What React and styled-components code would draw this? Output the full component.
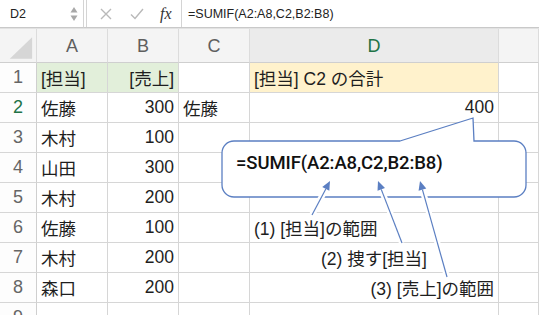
import React from 'react';
import styled, { createGlobalStyle } from 'styled-components';

const Global = createGlobalStyle`
  html, body { margin: 0; padding: 0; background: #fff; }
  body { font-family: "Liberation Sans", "Noto Sans CJK JP", sans-serif; }
`;

const Page = styled.div`
  position: relative;
  width: 539px;
  height: 315px;
  overflow: hidden;
  background: #fff;
`;

const Toolbar = styled.div`
  display: flex;
  align-items: stretch;
  height: 27px;
  border-bottom: 1px solid #c9c9c9;
  color: #222;
  font-size: 12.5px;
`;

const NameBox = styled.div`
  box-sizing: border-box;
  width: 84px;
  display: flex;
  align-items: center;
  justify-content: space-between;
  padding: 0 5px 0 10px;
  border-right: 1px solid #d4d4d4;
  border-bottom: 1px solid #c9c9c9;
  margin-bottom: -1px;
`;

const Spinner = styled.svg`
  width: 8px;
  height: 18px;
`;

const Actions = styled.div`
  display: flex;
  align-items: center;
  width: 96px;
  margin-left: 2px;
  border-left: 1px solid #d4d4d4;
  border-right: 1px solid #d4d4d4;
  padding-left: 13px;
  gap: 18px;
  box-sizing: border-box;
`;

const Fx = styled.span`
  font-family: "Liberation Serif", serif;
  font-style: italic;
  font-size: 16px;
  color: #333;
  margin-left: -2px;
`;

const FormulaText = styled.div`
  display: flex;
  align-items: center;
  padding-left: 6px;
`;

const Sheet = styled.div`
  display: grid;
  grid-template-columns: 37px 71px 71px 71px 249px 1fr;
  grid-template-rows: 34px;
  grid-auto-rows: 30px;
  border-top: 1px solid #e2e2e2;
`;

const Cell = styled.div`
  box-sizing: border-box;
  border-right: 1px solid #d6d6d6;
  border-bottom: 1px solid #d6d6d6;
  display: flex;
  align-items: center;
  justify-content: ${p => p.$align === 'right' ? 'flex-end' : p.$align === 'center' ? 'center' : 'flex-start'};
  padding: 0 4px;
  font-size: 17.5px;
  color: #1e1e1e;
  background: ${p => p.$bg || '#fff'};
  white-space: nowrap;
`;

const ColHead = styled(Cell)`
  justify-content: center;
  background: ${p => p.$active ? '#ebebeb' : '#f4f4f4'};
  color: ${p => p.$active ? '#217346' : '#5f5f5f'};
  border-right-color: #dcdcdc;
  border-bottom-color: #cfcfcf;
  font-size: 18px;
  padding-top: 2px;
`;

const RowHead = styled(Cell)`
  justify-content: center;
  background: #fdfdfd;
  color: ${p => p.$active ? '#217346' : '#666'};
  font-size: 18px;
  border-right-color: #cfcfcf;
`;

const Corner = styled(ColHead)`
  padding: 0;
`;

const CornerMark = styled.svg`
  width: 37px;
  height: 33px;
`;

const Note = styled.div`
  position: absolute;
  left: 236px;
  top: 152px;
  font-family: Roboto, "Liberation Sans", sans-serif;
  font-size: 18.5px;
  font-weight: 500;
  color: #111;
  line-height: 22px;
  letter-spacing: -0.1px;
`;

const Overlay = styled.svg`
  position: absolute;
  left: 0;
  top: 0;
  pointer-events: none;
`;

const rows = [
  ['[担当]', '[売上]', '', '[担当] C2 の合計'],
  ['佐藤', '300', '佐藤', '400'],
  ['木村', '100', '', ''],
  ['山田', '300', '', ''],
  ['木村', '200', '', ''],
  ['佐藤', '100', '', '(1) [担当]の範囲'],
  ['木村', '200', '', '(2) 捜す[担当]'],
  ['森口', '200', '', '(3) [売上]の範囲'],
  ['', '', '', ''],
];

const dAlign = ['left', 'right', 'left', 'left', 'left', 'left', 'center', 'right', 'left'];

const blue = '#5b7fc2';

function Arrow({ x1, y1, x2, y2 }) {
  const dx = x2 - x1;
  const dy = y2 - y1;
  const len = Math.hypot(dx, dy);
  const ux = dx / len;
  const uy = dy / len;
  const bx = x2 - ux * 9;
  const by = y2 - uy * 9;
  const px = -uy * 4;
  const py = ux * 4;
  return (
    <g>
      <line x1={x1} y1={y1} x2={bx} y2={by} stroke="#fff" strokeWidth="6" />
      <line x1={x1} y1={y1} x2={bx} y2={by} stroke={blue} strokeWidth="1.2" />
      <polygon points={`${x2},${y2} ${bx + px},${by + py} ${bx - px},${by - py}`} fill={blue} />
    </g>
  );
}

export default function App() {
  return (
    <Page>
      <Global />
      <Toolbar>
        <NameBox>
          D2
          <Spinner viewBox="0 0 8 18">
            <polygon points="4,2 7.5,7.5 0.5,7.5" fill="#a8a8a8" />
            <polygon points="0.5,10.5 7.5,10.5 4,16" fill="#a8a8a8" />
          </Spinner>
        </NameBox>
        <Actions>
          <svg width="12" height="12" viewBox="0 0 12 12">
            <path d="M1 1 L11 11 M11 1 L1 11" stroke="#b9b9b9" strokeWidth="1.4" />
          </svg>
          <svg width="14" height="12" viewBox="0 0 14 12">
            <path d="M1 6.5 L5 10.5 L13 1" stroke="#b9b9b9" strokeWidth="1.4" fill="none" />
          </svg>
          <Fx>fx</Fx>
        </Actions>
        <FormulaText>=SUMIF(A2:A8,C2,B2:B8)</FormulaText>
      </Toolbar>
      <Sheet>
        <Corner>
          <CornerMark viewBox="0 0 37 33">
            <polygon points="10,30 33,30 33,8" fill="#d6d6d6" />
          </CornerMark>
        </Corner>
        <ColHead>A</ColHead>
        <ColHead>B</ColHead>
        <ColHead>C</ColHead>
        <ColHead $active>D</ColHead>
        <ColHead />
        {rows.map((r, i) => (
          <React.Fragment key={i}>
            <RowHead $active={i === 1}>{i + 1}</RowHead>
            <Cell $bg={i === 0 ? '#e2efda' : undefined}>{r[0]}</Cell>
            <Cell $align="right" $bg={i === 0 ? '#e2efda' : undefined}>{r[1]}</Cell>
            <Cell>{r[2]}</Cell>
            <Cell $align={dAlign[i]} $bg={i === 0 ? '#fff2cc' : undefined}>{r[3]}</Cell>
            <Cell />
          </React.Fragment>
        ))}
      </Sheet>
      <Overlay width="539" height="315" viewBox="0 0 539 315">
        <path
          d="M400 141 L473 118 L474 141 L514 141 A12 12 0 0 1 526 153 L526 185 A12 12 0 0 1 514 197 L234 197 A12 12 0 0 1 222 185 L222 153 A12 12 0 0 1 234 141 Z"
          fill="#fff"
          stroke={blue}
          strokeWidth="1.3"
        />
        <Arrow x1={312} y1={215} x2={330} y2={181} />
        <Arrow x1={402} y1={243} x2={378} y2={181} />
        <Arrow x1={447} y1={277} x2={420} y2={181} />
      </Overlay>
      <Note>=SUMIF(A2:A8,C2,B2:B8)</Note>
    </Page>
  );
}
